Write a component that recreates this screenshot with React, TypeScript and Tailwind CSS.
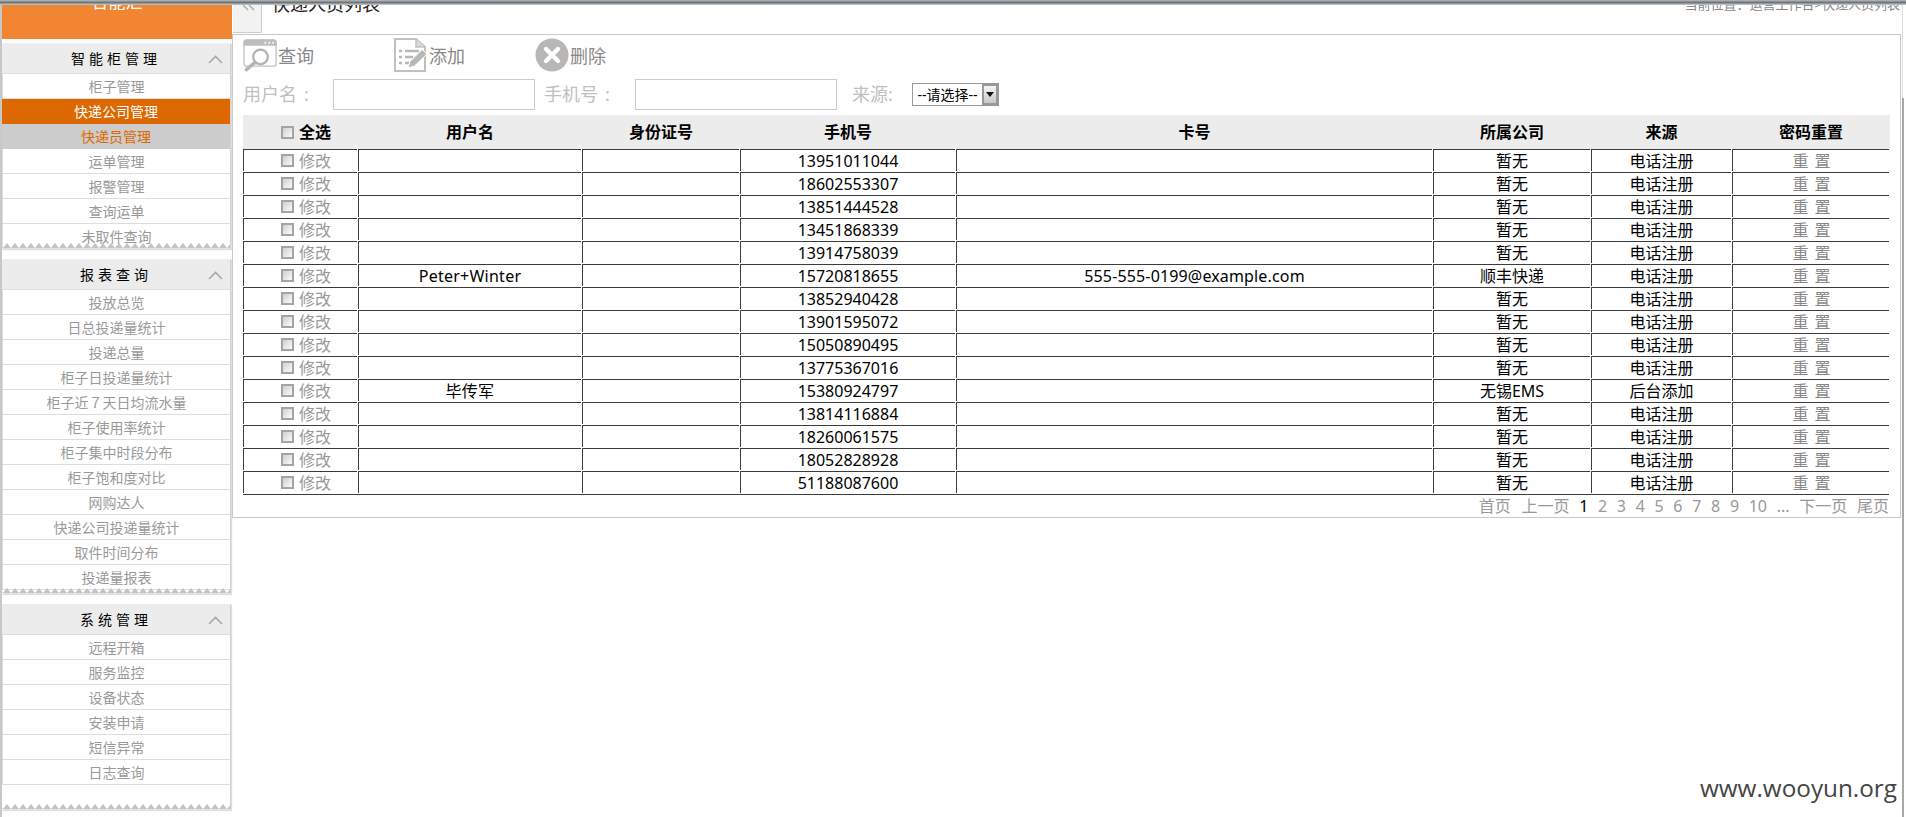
import React from "react";

const sections = [
  {
    title: "智能柜管理",
    cls: "mt-[4px]",
    items: ["柜子管理", "快递公司管理", "快递员管理", "运单管理", "报警管理", "查询运单", "未取件查询"],
  },
  {
    title: "报表查询",
    cls: "mt-[10px] pb-[4px]",
    items: [
      "投放总览",
      "日总投递量统计",
      "投递总量",
      "柜子日投递量统计",
      "柜子近７天日均流水量",
      "柜子使用率统计",
      "柜子集中时段分布",
      "柜子饱和度对比",
      "网购达人",
      "快递公司投递量统计",
      "取件时间分布",
      "投递量报表",
    ],
  },
  {
    title: "系统管理",
    cls: "mt-[10px] pb-[25px]",
    items: ["远程开箱", "服务监控", "设备状态", "安装申请", "短信异常", "日志查询"],
  },
];

const phones = [
  "13951011044",
  "18602553307",
  "13851444528",
  "13451868339",
  "13914758039",
  "15720818655",
  "13852940428",
  "13901595072",
  "15050890495",
  "13775367016",
  "15380924797",
  "13814116884",
  "18260061575",
  "18052828928",
  "51188087600",
];

const cols = "grid grid-cols-[115px_224px_158px_216px_477px_158px_141px_158px]";

function Jag({ id }: { id: string }) {
  return (
    <svg className="absolute left-0 bottom-0 w-full h-[6px]" aria-hidden="true">
      <defs>
        <pattern id={id} x="1" width="8" height="6" patternUnits="userSpaceOnUse">
          <path d="M0 5 L4 0 L8 5 Z" fill="#c4c4c4" />
          <rect y="5" width="8" height="1" fill="#e4e4e4" />
        </pattern>
      </defs>
      <rect width="100%" height="6" fill={`url(#${id})`} />
    </svg>
  );
}

function Section({ title, items, cls, idx }: { title: string; items: string[]; cls: string; idx: number }) {
  return (
    <div className={`relative bg-white border-r border-[#d4d4d4] shadow-[1px_1px_1px_#ddd] mr-px ${cls}`}>
      <div className="relative h-[31px] bg-[#ececec] rounded-t-[2px] border-b border-[#ddd] flex items-center justify-center text-[14px] tracking-[4px] text-black">
        {title}
        <svg className="absolute left-[206px] top-[12px]" width="15" height="9" viewBox="0 0 15 9" aria-hidden="true">
          <path d="M1 8 L7.5 1.5 L14 8" fill="none" stroke="#a8a8a8" strokeWidth="1.6" />
        </svg>
      </div>
      {items.map((t) => {
        const active = t === "快递公司管理";
        const sub = t === "快递员管理";
        return (
          <div
            key={t}
            className={`h-[25px] flex items-center justify-center text-[14px] border-b ${
              active
                ? "bg-[#dd6800] text-white border-[#dd6800]"
                : sub
                  ? "bg-[#cccccc] text-[#dd6800] border-[#cccccc]"
                  : "text-[#999999] border-[#dddddd] border-l"
            }`}
          >
            {t}
          </div>
        );
      })}
      <Jag id={`jag${idx}`} />
    </div>
  );
}

function SearchIcon() {
  return (
    <svg width="35" height="34" viewBox="0 0 36 34" aria-hidden="true">
      <rect x="1" y="1.5" width="33" height="27" rx="2.5" fill="#fff" stroke="#c4c4c4" strokeWidth="1.4" />
      <path d="M0.5 4 a3 3 0 0 1 3 -3 h28 a3 3 0 0 1 3 3 v3.5 h-34 Z" fill="#bdbdbd" />
      <circle cx="23" cy="4.4" r="1" fill="#fff" />
      <circle cx="27" cy="4.4" r="1" fill="#fff" />
      <circle cx="31" cy="4.4" r="1" fill="#fff" />
      <circle cx="18" cy="19" r="7.5" fill="#fff" stroke="#b4b4b4" strokeWidth="2.4" />
      <path d="M12.5 24.5 L3.5 32" stroke="#b4b4b4" strokeWidth="3.6" strokeLinecap="round" />
    </svg>
  );
}

function AddIcon() {
  return (
    <svg width="34" height="34" viewBox="0 0 34 34" aria-hidden="true">
      <path d="M1 1 H22 L31 9 V33 H1 Z" fill="#fff" stroke="#c0c0c0" strokeWidth="2" />
      <path d="M22 1 V9 H31" fill="#d8d8d8" stroke="#c0c0c0" strokeWidth="1.5" />
      <path d="M5 13 h3 M11 13 h14 M5 19 h3 M11 19 h8 M5 25 h3 M11 25 h4" stroke="#b8b8b8" strokeWidth="2.4" />
      <path d="M14 30 L16 23.5 L28 11.5 L33 16 L20.5 28 Z" fill="#b8b8b8" stroke="#fff" strokeWidth="1" />
    </svg>
  );
}

function DeleteIcon() {
  return (
    <svg width="34" height="34" viewBox="0 0 34 34" aria-hidden="true">
      <circle cx="17" cy="17" r="16.5" fill="#b7b7b7" />
      <path d="M11 11 L23 23 M23 11 L11 23" stroke="#fff" strokeWidth="4.4" strokeLinecap="round" />
    </svg>
  );
}

function Check() {
  return (
    <input
      type="checkbox"
      className="appearance-none w-[13px] h-[13px] shrink-0 border-2 border-[#a4a4a4] bg-gradient-to-br from-[#d0d0d0] to-[#fbfbfb]"
    />
  );
}

const cell = "border-l border-t border-[#3c3c3c] mr-px mb-px h-[22px] flex items-center justify-center";

function Row({ phone, i }: { phone: string; i: number }) {
  const name = i === 5 ? "Peter+Winter" : i === 10 ? "毕传军" : "";
  const card = i === 5 ? "555-555-0199@example.com" : "";
  const company = i === 5 ? "顺丰快递" : i === 10 ? "无锡EMS" : "暂无";
  const source = i === 10 ? "后台添加" : "电话注册";
  return (
    <div className={`${cols} text-black`}>
      <div className="border-l border-t border-[#3c3c3c] mr-px mb-px h-[22px] flex items-center gap-[5px] pl-[37px]">
        <Check />
        <span className="text-[#999999]">修改</span>
      </div>
      <div className={`${cell} tracking-[0.25px]`}>{name}</div>
      <div className={cell} />
      <div className={cell}>{phone}</div>
      <div className={`${cell} tracking-[0.15px]`}>{card}</div>
      <div className={cell}>{company}</div>
      <div className={cell}>{source}</div>
      <div className={`${cell} text-[#888888] tracking-[1px] pl-[2px]`}>重 置</div>
    </div>
  );
}

const pages = ["2", "3", "4", "5", "6", "7", "8", "9", "10", "..."];

export default function App() {
  return (
    <div className="relative h-[817px] w-[1906px] overflow-hidden bg-white [font-family:'Noto_Sans','Noto_Sans_CJK_SC',sans-serif] text-[16px]">
      <div className="h-[5px] bg-gradient-to-b from-[#b8bcc0] via-[#6e7478] to-[#d0d0d0]" />
      <div className="flex h-[812px]">
        <div className="w-[2px] bg-[#c8c8c8]" />
        <aside className="w-[230px] shrink-0">
          <div className="h-[34px] bg-[#f28532] overflow-hidden flex justify-center">
            <span className="text-[17px] leading-[24px] text-white -mt-[15px]">合能汇</span>
          </div>
          {sections.map((s, i) => (
            <Section key={s.title} title={s.title} items={s.items} cls={s.cls} idx={i} />
          ))}
        </aside>

        <main className="flex-1 min-w-0">
          <div className="h-[29px] flex">
            <div className="ml-px w-[29px] h-[28px] bg-[#f2f2f2] border-r border-b border-[#cccccc] rounded-br-[2px] overflow-hidden">
              <svg className="ml-[9px]" width="14" height="7" viewBox="0 0 14 7" aria-hidden="true">
                <path d="M1 0 L6 5 M7 0 L12 5" stroke="#a8a8a8" strokeWidth="1.4" fill="none" />
              </svg>
            </div>
            <div className="ml-[10px] h-[9px] overflow-hidden">
              <div className="text-[18px] leading-[24px] text-[#222222] -mt-[13px]">快递人员列表</div>
            </div>
            <div className="ml-auto mr-[2px] h-[6px] overflow-hidden">
              <div className="text-[13px] leading-[20px] text-[#888888] -mt-[11px]">当前位置：运营工作台&gt;快递人员列表</div>
            </div>
          </div>

          <section className="border border-[#c8c8c8] h-[484px] mr-px pl-[10px]">
            <div className="pt-[3px] h-[37px] flex text-[18px] text-[#888888]">
              <div className="w-[151px] flex items-center">
                <SearchIcon />
                <span className="pt-[2px]">查询</span>
              </div>
              <div className="w-[141px] flex items-center">
                <AddIcon />
                <span className="pt-[2px] ml-px">添加</span>
              </div>
              <div className="flex items-center">
                <DeleteIcon />
                <span className="pt-[2px] ml-px">删除</span>
              </div>
            </div>

            <div className="mt-[7px] h-[31px] flex items-center text-[18px] text-[#c0c0c0]">
              <span className="w-[90px]">
                用户名<span className="ml-[7px]">:</span>
              </span>
              <div className="w-[202px] h-[31px] border border-[#cccccc]" />
              <span className="ml-[9px] w-[91px]">
                手机号<span className="ml-[7px]">:</span>
              </span>
              <div className="w-[202px] h-[31px] border border-[#cccccc]" />
              <span className="ml-[15px] w-[60px]">来源:</span>
              <div className="w-[87px] h-[23px] border border-[#999999] flex items-center text-[14px] text-black bg-white">
                <span className="flex-1 text-center leading-none whitespace-nowrap">--请选择--</span>
                <span className="w-[16px] h-full border-2 border-[#999999] bg-gradient-to-b from-[#f4f4f4] to-[#c8c8c8] flex items-center justify-center">
                  <svg width="8" height="5" viewBox="0 0 8 5" aria-hidden="true">
                    <path d="M0 0 H8 L4 5 Z" fill="#111111" />
                  </svg>
                </span>
              </div>
            </div>

            <div className={`${cols} mt-[5px] h-[34px] bg-[#ececec] items-center font-bold text-black w-[1647px]`}>
              <div className="flex items-center gap-[5px] pl-[38px]">
                <Check />
                <span>全选</span>
              </div>
              <div className="text-center">用户名</div>
              <div className="text-center">身份证号</div>
              <div className="text-center">手机号</div>
              <div className="text-center">卡号</div>
              <div className="text-center">所属公司</div>
              <div className="text-center">来源</div>
              <div className="text-center">密码重置</div>
            </div>

            {phones.map((p, i) => (
              <Row key={p} phone={p} i={i} />
            ))}

            <div className="w-[1646px] h-[23px] border-t border-[#3c3c3c] flex items-center justify-end gap-[9.7px] text-[#999999]">
              <span className="mr-px">首页</span>
              <span>上一页</span>
              <span className="text-black">1</span>
              {pages.map((n) => (
                <span key={n}>{n}</span>
              ))}
              <span>下一页</span>
              <span>尾页</span>
            </div>
          </section>
        </main>

        <div className="w-[4px] shrink-0 flex flex-col">
          <div className="h-[93px] border-l border-[#dddddd]" />
          <div className="flex-1 border-l-2 border-[#a8a8a8]" />
        </div>
      </div>

      <div className="absolute right-[9px] top-[771px] text-[24.3px] leading-[34px] text-[#444444] [font-family:'Open_Sans',sans-serif]">
        www.wooyun.org
      </div>
    </div>
  );
}
